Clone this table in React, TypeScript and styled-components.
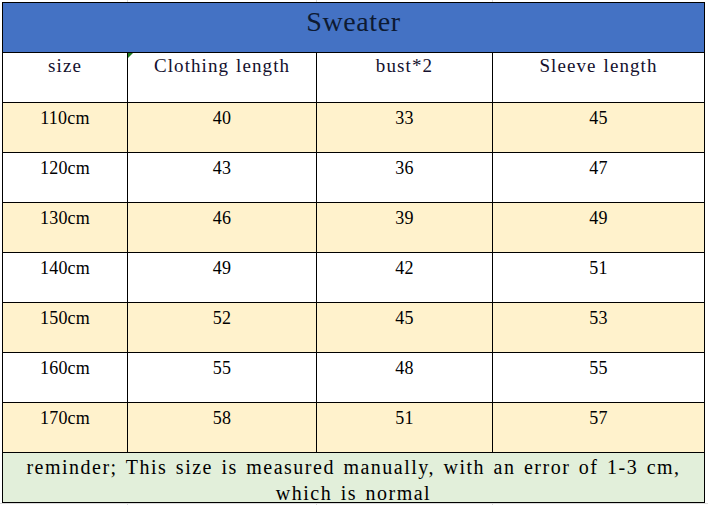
import styled, { createGlobalStyle, css } from 'styled-components';

const GlobalStyle = createGlobalStyle`
  html,
  body {
    margin: 0;
    background: #ffffff;
  }
`;

const gridLine = 'linear-gradient(#dadada, #dadada)';

// sheet gridlines peeking out around the table
const Page = styled.div`
  background:
    ${gridLine} 127px 0 / 1px 100% no-repeat,
    ${gridLine} 316px 0 / 1px 100% no-repeat,
    ${gridLine} 492px 0 / 1px 100% no-repeat,
    ${gridLine} 0 503px / 100% 1px no-repeat;
  min-height: 505px;
  padding: 2px 0 0 2px;
  box-sizing: border-box;
`;

const Sheet = styled.div`
  border-left: 1px solid #000;
  border-top: 1px solid #000;
  display: grid;
  font-family: 'Liberation Serif', serif;
  grid-auto-rows: 50px;
  grid-template-columns: 125px 189px 176px 212px;
  width: fit-content;
`;

type Tone = 'white' | 'cream';

const Cell = styled.div<{ $tone?: Tone }>`
  background: ${({ $tone }) => ($tone === 'cream' ? '#fff2cc' : '#ffffff')};
  border-bottom: 1px solid #000;
  border-right: 1px solid #000;
  box-sizing: border-box;
  color: #000;
  position: relative;
  text-align: center;
  white-space: nowrap;
`;

const TitleCell = styled(Cell)`
  background: #4472c4;
  color: #0d1a33;
  font-size: 28px;
  grid-column: 1 / -1;
  letter-spacing: 0.6px;
  line-height: 32px;
  padding-top: 3px;
`;

const LabelCell = styled(Cell)<{ $flag?: boolean }>`
  color: #14102e;
  font-size: 19px;
  letter-spacing: 1.1px;
  line-height: 22px;
  padding-top: 2px;
  word-spacing: 1px;

  ${({ $flag }) =>
    $flag &&
    css`
      &::before {
        border-right: 5px solid transparent;
        border-top: 5px solid #1f7a1f;
        content: '';
        left: 0;
        position: absolute;
        top: 0;
      }
    `}
`;

const DataCell = styled(Cell)`
  font-size: 18px;
  letter-spacing: 0.2px;
  line-height: 20px;
  padding-top: 5px;
`;

const NoteCell = styled(Cell)`
  background: #e2efda;
  font-size: 20px;
  grid-column: 1 / -1;
  letter-spacing: 1.5px;
  line-height: 26px;
  padding: 1px 10px 0;
  white-space: normal;
  word-spacing: 2px;
`;

const labels = ['size', 'Clothing length', 'bust*2', 'Sleeve length'];

const rows = [
  ['110cm', '40', '33', '45'],
  ['120cm', '43', '36', '47'],
  ['130cm', '46', '39', '49'],
  ['140cm', '49', '42', '51'],
  ['150cm', '52', '45', '53'],
  ['160cm', '55', '48', '55'],
  ['170cm', '58', '51', '57'],
];

function App() {
  return (
    <Page>
      <GlobalStyle />
      <Sheet>
        <TitleCell>Sweater</TitleCell>

        {labels.map((label, i) => (
          <LabelCell key={label} $flag={i === 1}>
            {label}
          </LabelCell>
        ))}

        {rows.map((row, r) =>
          row.map((value, c) => (
            <DataCell key={`${r}-${c}`} $tone={r % 2 === 0 ? 'cream' : 'white'}>
              {value}
            </DataCell>
          ))
        )}

        <NoteCell>
          reminder; This size is measured manually, with an error of 1-3 cm,
          which is normal
        </NoteCell>
      </Sheet>
    </Page>
  );
}

export default App;
